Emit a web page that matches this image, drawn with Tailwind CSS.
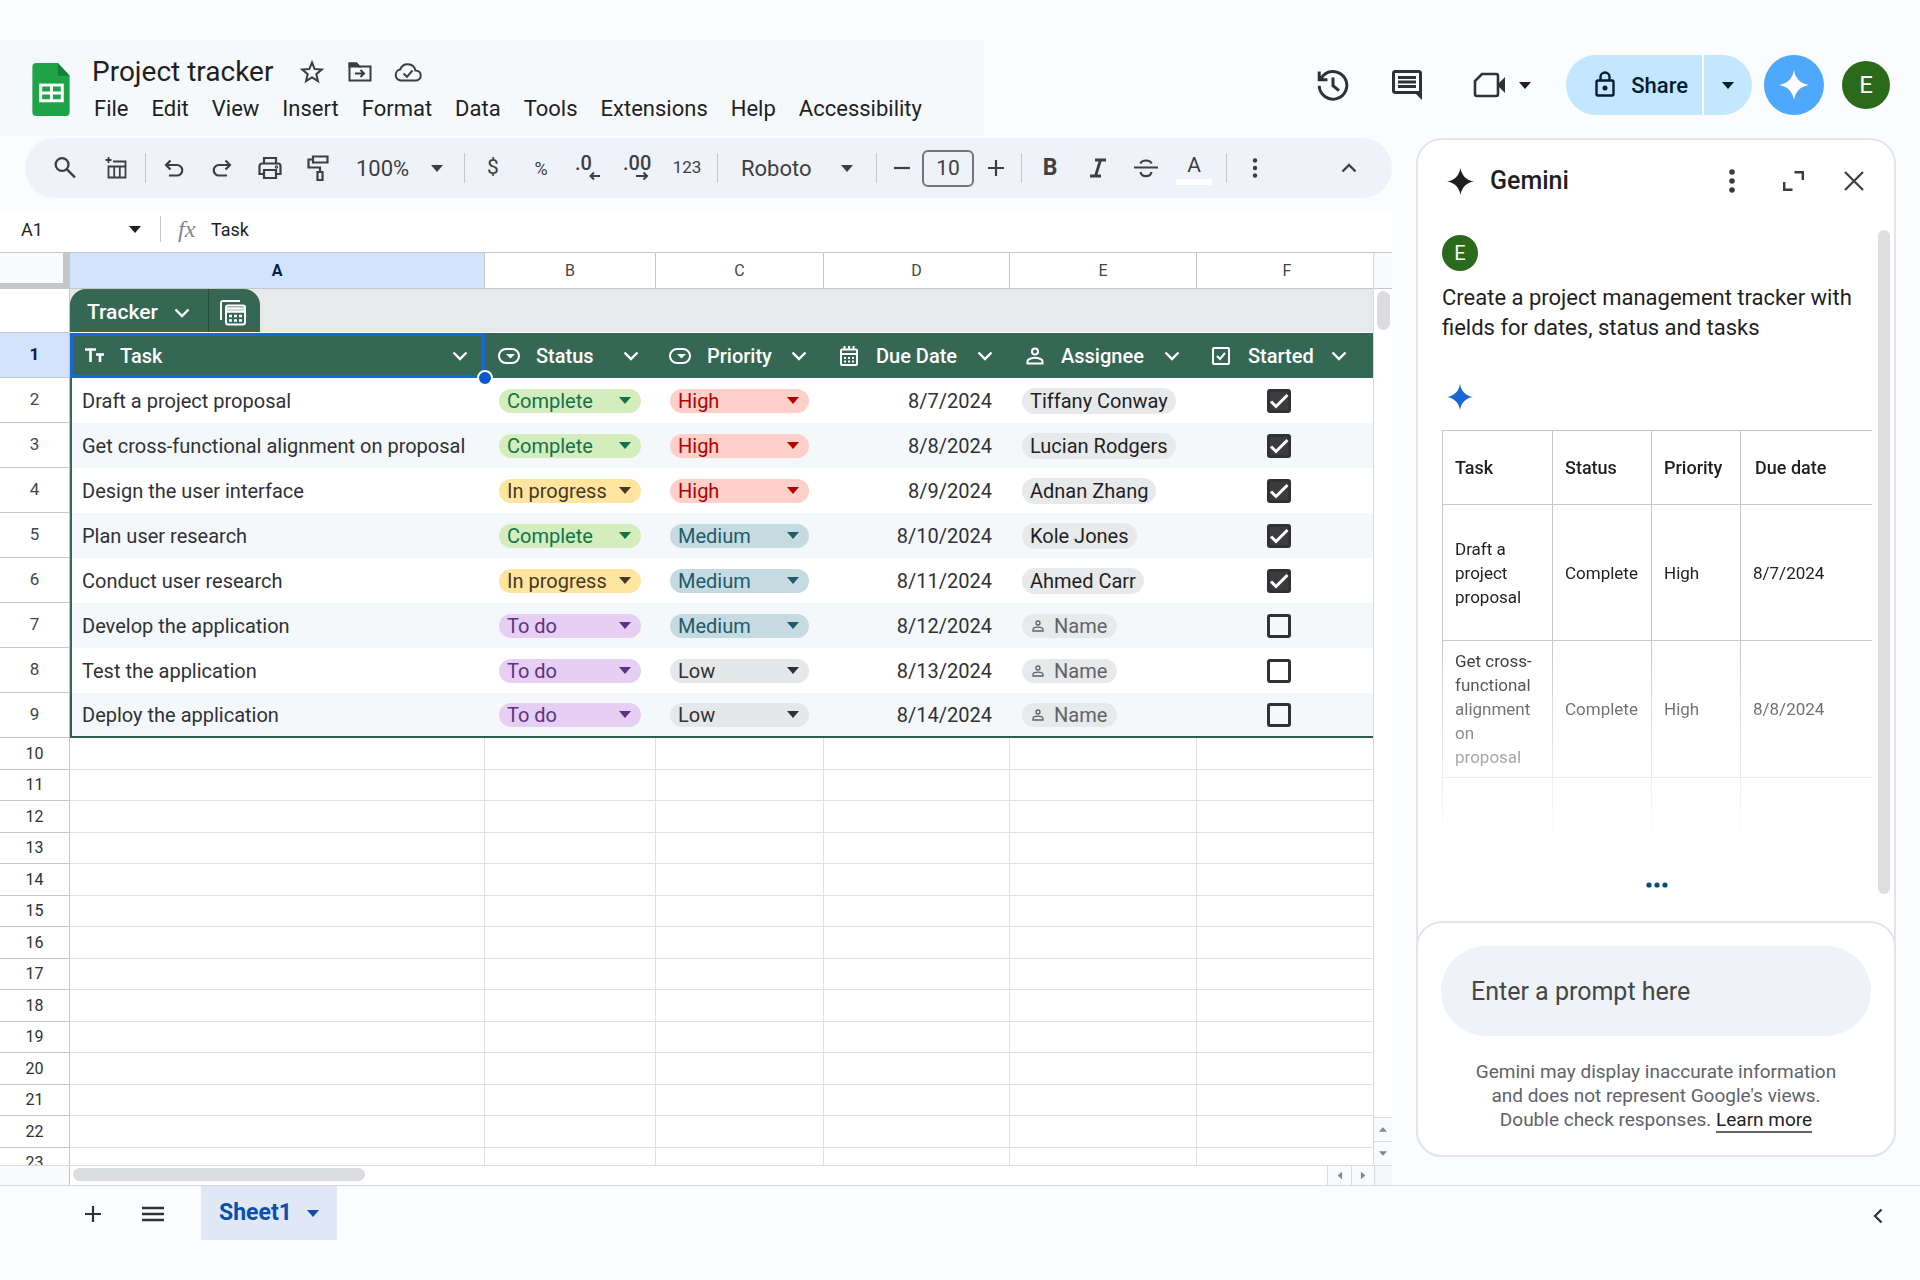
<!DOCTYPE html>
<html lang="en">
<head>
<meta charset="utf-8">
<title>Project tracker</title>
<script src="https://cdn.jsdelivr.net/npm/@tailwindcss/browser@4"></script>
</head>
<body class="flex h-screen flex-col overflow-hidden bg-[#fbfcfe] font-[Roboto,sans-serif] text-[#1f1f1f]">
<svg class="hidden">
  <symbol id="down" viewBox="0 0 12 7"><path d="M0 0h12L6 7z" fill="currentColor"/></symbol>
  <symbol id="chev" viewBox="0 0 16 10"><path d="M1.500 1.500 8 8l6.500-6.500" fill="none" stroke="currentColor" stroke-width="2.400"/></symbol>
  <symbol id="star4" viewBox="0 0 28 28"><path d="M14 0c1.200 7.800 6.200 12.800 14 14-7.800 1.200-12.800 6.200-14 14C12.800 20.200 7.800 15.200 0 14 7.800 12.800 12.800 7.800 14 0z" fill="currentColor"/></symbol>
  <symbol id="person" viewBox="0 0 18 18"><g fill="none" stroke="currentColor" stroke-width="2"><circle cx="9" cy="4.500" r="3"/><path d="M1.500 16.500v-2c0-2.500 4.500-3.700 7.500-3.700s7.500 1.200 7.500 3.700v2z"/></g></symbol>
  <symbol id="pick" viewBox="0 0 22 16"><rect x="1" y="1" width="20" height="14" rx="7" fill="none" stroke="currentColor" stroke-width="2"/><path d="M8 6h9l-4.500 4.500z" fill="currentColor"/></symbol>
  <symbol id="cal" viewBox="0 0 18 20"><path d="M2 3.500h14a1 1 0 0 1 1 1V18a1 1 0 0 1-1 1H2a1 1 0 0 1-1-1V4.500a1 1 0 0 1 1-1zM1 8h16M4.500 0v4M9 0v4M13.500 0v4" fill="none" stroke="currentColor" stroke-width="2"/><path d="M4 11h2v2H4zM8 11h2v2H8zM12 11h2v2h-2zM4 14.500h2v2H4zM8 14.500h2v2H8zM12 14.500h2v2h-2z" fill="currentColor"/></symbol>
  <symbol id="tick" viewBox="0 0 18 18"><g fill="none" stroke="currentColor" stroke-width="2"><rect x="1" y="1" width="16" height="16" rx="1"/><path d="m5 9 3 3 5-6"/></g></symbol>
  <symbol id="text" viewBox="0 0 20 15"><path d="M1 1.500h11M6.500 1.500V14M12 6.500h8M16 6.500V14" fill="none" stroke="currentColor" stroke-width="2.600"/></symbol>
</svg>

<header class="flex h-[138px] shrink-0 items-start justify-between pt-10 pr-[30px]">
  <div class="flex h-24 w-[984px] bg-[#f6f9fb] pl-8">
    <svg class="mt-[23px] h-[53px] w-[38px] shrink-0" viewBox="0 0 38 54"><path d="M4 0h22l12 13v37a4 4 0 0 1-4 4H4a4 4 0 0 1-4-4V4a4 4 0 0 1 4-4z" fill="#1ea446"/><path d="m26 0 12 13H26z" fill="#13803a"/><path d="M7 21h25v19H7z" fill="#fff"/><path d="M10 24h8v5h-8zM21 24h8v5h-8zM10 32h8v5h-8zM21 32h8v5h-8z" fill="#1ea446"/></svg>
    <div class="ml-[22px] flex flex-col pt-4">
      <div class="flex h-8 items-center">
        <h1 class="w-[182px] text-[28px] leading-8 whitespace-nowrap">Project tracker</h1>
        <button aria-label="Star" class="ml-[26px]"><svg class="h-6 w-6" viewBox="0 0 24 24" fill="none" stroke="#3c3c3c" stroke-width="2"><path d="m12 2.500 2.700 6.600 7 .5-5.400 4.600 1.700 7L12 17.400l-6 3.800 1.700-7-5.400-4.600 7-.5z"/></svg></button>
        <button aria-label="Move" class="ml-6"><svg class="h-5 w-6" viewBox="0 0 24 20" fill="none" stroke="#3c3c3c" stroke-width="2"><path d="M1.500 1.500h7l2.500 3h11.500V18.500h-21zM7 11.500h9M12.500 8l3.500 3.500-3.500 3.500"/><path d="M1.500 1.500h7l2.500 3H1.500z" fill="#3c3c3c"/></svg></button>
        <button aria-label="Saved to Drive" class="ml-[22px]"><svg class="h-5 w-7" viewBox="0 0 28 20" fill="none" stroke="#3c3c3c" stroke-width="2"><path d="M7 18.500a5.500 5.500 0 0 1-.8-10.900A8 8 0 0 1 21.500 8.500 5 5 0 0 1 22 18.500zM9.500 11.500l3.500 3.300 5.500-6.300"/></svg></button>
      </div>
      <nav class="mt-[5px] flex gap-[23px] pl-0.5 text-[22px] leading-8">
        <a href="#">File</a><a href="#">Edit</a><a href="#">View</a><a href="#">Insert</a><a href="#">Format</a><a href="#">Data</a><a href="#">Tools</a><a href="#">Extensions</a><a href="#">Help</a><a href="#">Accessibility</a>
      </nav>
    </div>
  </div>
  <div class="flex items-center pt-[15px]">
    <button aria-label="Version history"><svg class="h-9 w-9" viewBox="0 0 24 24" fill="none" stroke="#303134" stroke-width="2"><path d="M2.800 12.500A9.200 9.200 0 1 0 5.700 5.500L3.500 8M2.800 3v5.500H8.300M12 7v5.500l4 3.300"/></svg></button>
    <button aria-label="Comments" class="ml-[38px]"><svg class="h-9 w-9" viewBox="0 0 24 24" fill="#303134"><path d="M21.990 4c0-1.100-.89-2-1.990-2H4c-1.100 0-2 .9-2 2v12c0 1.100.9 2 2 2h14l4 4zM20 4v12H4V4zM6 12h12v2H6zM6 9h12v2H6zM6 6h12v2H6z"/></svg></button>
    <button aria-label="Meet" class="ml-12 flex items-center gap-3.5"><svg class="h-7 w-8" viewBox="0 0 32 28"><path d="M9 3h14a2 2 0 0 1 2 2v18a2 2 0 0 1-2 2H4a2 2 0 0 1-2-2V10z" fill="none" stroke="#303134" stroke-width="2.600"/><path d="m24 14 8-8v16z" fill="#303134"/></svg><svg class="h-[7px] w-3"><use href="#down"/></svg></button>
    <div class="ml-[35px] flex h-[60px] overflow-hidden rounded-full bg-[#c2e7ff] text-[#001d35]">
      <button class="flex w-[136px] items-center justify-end gap-4 pr-3.5 text-[22px] font-medium"><svg class="h-7 w-5" viewBox="0 0 20 28" fill="none" stroke="#001d35" stroke-width="2.400"><rect x="1.500" y="9.500" width="17" height="15" rx="1.500"/><path d="M5.500 9V6a4.500 4.500 0 0 1 9 0v3"/><circle cx="10" cy="17" r="1.300" fill="#001d35"/></svg>Share</button>
      <button aria-label="Share options" class="flex w-[50px] items-center justify-center border-l-2 border-white"><svg class="h-[7px] w-3"><use href="#down"/></svg></button>
    </div>
    <button aria-label="Gemini" class="ml-3 flex h-[60px] w-[60px] items-center justify-center rounded-full bg-[#4ea8fc] text-white"><svg class="h-[30px] w-[30px]"><use href="#star4"/></svg></button>
    <button aria-label="Account" class="ml-[18px] h-12 w-12 rounded-full bg-[#2c6a1b] text-2xl text-white">E</button>
  </div>
</header>

<main class="flex min-h-0 flex-1 gap-6 border-b border-[#d5d8dc] pr-6">
  <section class="flex min-w-0 flex-1 flex-col">
    <div class="ml-[25px] flex h-[60px] shrink-0 items-center rounded-full bg-[#eff2f8] pr-[19px] pl-4 text-[21px] text-[#3c3f43] [&>button]:flex [&>button]:h-12 [&>button]:w-12 [&>button]:shrink-0 [&>button]:items-center [&>button]:justify-center [&>hr]:mx-1 [&>hr]:h-[30px] [&>hr]:w-px [&>hr]:border-0 [&>hr]:bg-[#c4c7c9]">
      <button aria-label="Search"><svg class="h-7 w-7" viewBox="0 0 24 24" fill="none" stroke="currentColor" stroke-width="2"><circle cx="9.500" cy="9" r="5.500"/><path d="m13.500 13 7 7"/></svg></button>
      <button aria-label="Insert table" class="ml-1"><svg class="h-6 w-6" viewBox="0 0 24 24" fill="none" stroke="currentColor" stroke-width="1.800"><path d="M8 5.500h12.500v16h-17V10.500h17M9.200 10.500v11M14.800 10.500v11M3.500 1v6M.5 4h6"/></svg></button>
      <hr>
      <button aria-label="Undo"><svg class="h-5 w-5" viewBox="0 0 20 20" fill="none" stroke="currentColor" stroke-width="2.200"><path d="M6.500 2.500 2 7l4.500 4.500M2 7h11a5 5 0 0 1 0 10.500H5"/></svg></button>
      <button aria-label="Redo"><svg class="h-5 w-5" viewBox="0 0 20 20" fill="none" stroke="currentColor" stroke-width="2.200"><path d="M13.500 2.500 18 7l-4.500 4.500M18 7H7a5 5 0 0 0 0 10.500h8"/></svg></button>
      <button aria-label="Print"><svg class="h-6 w-6" viewBox="0 0 24 24" fill="none" stroke="currentColor" stroke-width="2.200"><path d="M6 7V2h12v5M5 18H1.500v-8a2.500 2.500 0 0 1 2.500-2.500h16a2.500 2.500 0 0 1 2.500 2.500v8H19M6 14h12v8H6z"/><circle cx="18.500" cy="11" r=".6"/></svg></button>
      <button aria-label="Paint format"><svg class="h-[26px] w-[22px]" viewBox="0 0 22 26" fill="none" stroke="currentColor" stroke-width="2.200"><path d="M6 1.500h14.500v6H6zM6 4.500H1.500v8H13V17M10.500 17h5v8h-5z"/></svg></button>
      <button aria-label="Zoom" class="!w-[118px] !justify-between pr-[17px] pl-3.5 text-[22px]">100%<svg class="h-[7px] w-3"><use href="#down"/></svg></button>
      <hr>
      <button aria-label="Currency">$</button>
      <button aria-label="Percent" class="text-[18px]">%</button>
      <button aria-label="Fewer decimals"><svg class="h-8 w-8 overflow-visible" viewBox="0 0 32 32"><text x="2" y="18" font-size="20" font-weight="500" fill="currentColor">.0</text><path d="M27 24h-9M21 20.500 17.500 24l3.500 3.500" fill="none" stroke="currentColor" stroke-width="2"/></svg></button>
      <button aria-label="More decimals"><svg class="h-8 w-8 overflow-visible" viewBox="0 0 32 32"><text x="2" y="18" font-size="20" font-weight="500" fill="currentColor">.00</text><path d="M15 24h11M22.500 20.500 26 24l-3.500 3.500" fill="none" stroke="currentColor" stroke-width="2"/></svg></button>
      <button class="!w-[52px] text-[17px]">123</button>
      <hr>
      <button class="!w-[150px] !justify-between pr-[19px] pl-[19px] text-[22px]">Roboto<svg class="h-[7px] w-3"><use href="#down"/></svg></button>
      <hr>
      <button aria-label="Decrease font size" class="!w-[41px]"><svg class="h-4 w-4" viewBox="0 0 16 16" stroke="currentColor" stroke-width="2.200"><path d="M0 8h16"/></svg></button>
      <input aria-label="Font size" value="10" class="h-[37px] w-[52px] rounded-md border-2 border-[#747775] text-center text-[21px] leading-8">
      <button aria-label="Increase font size" class="!w-[43px]"><svg class="h-4 w-4" viewBox="0 0 16 16" stroke="currentColor" stroke-width="2.200"><path d="M0 8h16M8 0v16"/></svg></button>
      <hr>
      <button aria-label="Bold" class="text-[23px] font-bold">B</button>
      <button aria-label="Italic"><svg class="h-5 w-4" viewBox="0 0 16 20" fill="none" stroke="currentColor" stroke-width="2.800"><path d="M5 2h11M0 18h11M10.500 2l-5 16"/></svg></button>
      <button aria-label="Strikethrough"><svg class="h-6 w-6" viewBox="0 0 24 24" fill="none" stroke="currentColor" stroke-width="2.200"><path d="M0 11.500h24M6.500 7.500C8 3.500 16 3.500 17.500 7.500M6.500 16c1 5.500 10 5.500 11 0"/></svg></button>
      <button aria-label="Text color"><span class="flex w-9 justify-center border-b-[6px] border-white leading-7">A</span></button>
      <hr class="ml-2!">
      <button aria-label="More"><svg class="h-5 w-1.5" viewBox="0 0 6 20" fill="currentColor"><circle cx="3" cy="2.500" r="2.200"/><circle cx="3" cy="10" r="2.200"/><circle cx="3" cy="17.500" r="2.200"/></svg></button>
      <button aria-label="Hide menus" class="ml-auto"><svg class="h-2.5 w-4 rotate-180"><use href="#chev"/></svg></button>
    </div>

    <div class="mt-3 flex h-[43px] shrink-0 items-center border-b border-[#c4c7c9] bg-white pb-1 text-[18px] text-[#1f1f1f]">
      <button class="flex w-[141px] items-center justify-between pl-[21px]">A1<svg class="h-[7px] w-3"><use href="#down"/></svg></button>
      <span class="ml-[19px] h-[26px] w-px bg-[#c4c7c9]"></span>
      <span class="ml-[17px] w-[33px] font-['Liberation_Serif',serif] text-[24px] text-[#80868b] italic">fx</span>
      <input aria-label="Formula" value="Task" class="min-w-0 flex-1">
    </div>

    <div class="flex min-h-0 flex-1">
      <div class="min-w-0 flex-1 overflow-hidden border-r border-[#d9dbde] bg-white">
        <table class="w-full table-fixed border-separate border-spacing-0">
          <colgroup><col class="w-[70px]"><col class="w-[415px]"><col class="w-[171px]"><col class="w-[168px]"><col class="w-[186px]"><col class="w-[187px]"><col></colgroup>
          <thead>
            <tr class="h-9 text-[16px] text-[#444746] [&>th]:border-r [&>th]:border-b [&>th]:border-[#c4c7c9] [&>th]:p-0 [&>th]:font-normal [&>th:last-child]:border-r-0 [&>th:last-child]:pl-1">
              <th class="border-r-[7px]! border-b-[6px]! bg-[#f8fafb]"></th>
              <th class="bg-[#d3e3fd] font-bold! text-[#041e49]">A</th><th>B</th><th>C</th><th>D</th><th>E</th><th>F</th>
            </tr>
          </thead>
          <tbody id="rows">
            <tr class="h-11">
              <td class="border-r border-b border-[#c4c7c9] p-0"></td>
              <td colspan="6" class="border-b border-white bg-[#e8e9eb] p-0 align-top">
                <div class="flex h-[43px] w-[190px] rounded-t-[16px] bg-[#356854] pt-0 text-white">
                  <button class="flex w-[138px] items-center justify-between pt-1 pr-[18px] pl-[17px] text-[21px] font-medium">Tracker<svg class="h-2.5 w-4"><use href="#chev"/></svg></button>
                  <button aria-label="Table views" class="flex flex-1 items-center justify-center border-l border-[#234d3c] pt-1 pr-1"><svg class="h-[26px] w-[26px]" viewBox="0 0 26 26" fill="none" stroke="currentColor" stroke-width="2"><path d="M1 20V3a2 2 0 0 1 2-2h17"/><rect x="6" y="5.500" width="19" height="19" rx="2"/><path d="M6 8.500h19M6 11.500h19" stroke-width="2.500"/><path d="M9 16h3M14 16h3M19 16h3M9 20.500h3M14 20.500h3M19 20.500h3" stroke-width="2.600"/></svg></button>
                </div>
              </td>
            </tr>
            <tr class="h-[45px] bg-[#356854] text-left text-[20px] text-white [&>th]:p-0 [&>th]:font-medium">
              <th class="border-r border-b border-[#c4c7c9] bg-[#d3e3fd] text-center text-[17px] font-bold! text-[#041e49]">1</th>
              <th class="relative"><div class="flex items-center pr-[17px] pl-3.5"><svg class="mr-4 h-[15px] w-5"><use href="#text"/></svg>Task<svg class="ml-auto h-2.5 w-4"><use href="#chev"/></svg></div>
                <div class="absolute inset-0 border-[3px] border-[#1967d2]"></div>
                <div class="absolute -right-2 -bottom-2 z-10 h-4 w-4 rounded-full border-2 border-white bg-[#0b57d0]"></div></th>
              <th><div class="flex items-center pr-[17px] pl-[13px]"><svg class="mr-4 h-4 w-[22px]"><use href="#pick"/></svg>Status<svg class="ml-auto h-2.5 w-4"><use href="#chev"/></svg></div></th>
              <th><div class="flex items-center pr-[17px] pl-[13px]"><svg class="mr-4 h-4 w-[22px]"><use href="#pick"/></svg>Priority<svg class="ml-auto h-2.5 w-4"><use href="#chev"/></svg></div></th>
              <th><div class="flex items-center pr-[17px] pl-4"><svg class="mr-[18px] h-5 w-[18px]"><use href="#cal"/></svg>Due Date<svg class="ml-auto h-2.5 w-4"><use href="#chev"/></svg></div></th>
              <th><div class="flex items-center pr-[17px] pl-4"><svg class="mr-[17px] h-[18px] w-[18px]"><use href="#person"/></svg>Assignee<svg class="ml-auto h-2.5 w-4"><use href="#chev"/></svg></div></th>
              <th><div class="flex items-center pl-[15px]"><svg class="mr-[18px] h-[18px] w-[18px]"><use href="#tick"/></svg>Started<svg class="ml-[17px] h-2.5 w-4"><use href="#chev"/></svg></div></th>
            </tr>
          </tbody>
        </table>
      </div>
      <div class="flex w-[18px] shrink-0 flex-col bg-white">
        <div class="h-9 border-b border-[#c4c7c9] bg-[#f8fafb]"></div>
        <div class="mx-auto mt-0.5 h-[39px] w-[13px] rounded-full bg-[#dadce0]"></div>
        <button aria-label="Scroll up" class="mt-auto flex h-6 items-center justify-center border-t border-[#d9dbde] bg-[#f8fafb] text-[#80868b]"><svg class="h-[5px] w-2 rotate-180"><use href="#down"/></svg></button>
        <button aria-label="Scroll down" class="flex h-6 items-center justify-center border-t border-[#d9dbde] bg-[#f8fafb] text-[#80868b]"><svg class="h-[5px] w-2"><use href="#down"/></svg></button>
      </div>
    </div>

    <div class="flex h-5 shrink-0 border-t border-[#d9dbde] bg-white">
      <div class="w-[70px] border-r border-[#c4c7c9] bg-[#f8fafb]"></div>
      <div class="mt-0.5 ml-[3px] h-[13px] w-[292px] rounded-full bg-[#dadce0]"></div>
      <button aria-label="Scroll left" class="ml-auto flex w-6 items-center justify-center border-l border-[#d9dbde] bg-[#f8fafb] text-[#80868b]"><svg class="h-[5px] w-2 rotate-90"><use href="#down"/></svg></button>
      <button aria-label="Scroll right" class="flex w-6 items-center justify-center border-x border-[#d9dbde] bg-[#f8fafb] text-[#80868b]"><svg class="h-[5px] w-2 -rotate-90"><use href="#down"/></svg></button>
      <div class="w-[17px] bg-[#f4f6f8]"></div>
    </div>
  </section>

  <aside class="mb-7 flex w-[480px] shrink-0 flex-col rounded-[26px] border-2 border-[#e3e5e8] bg-white">
    <div class="flex h-[84px] shrink-0 items-center pr-[30px] pb-0.5 pl-[29px]">
      <svg class="h-[27px] w-[27px]"><use href="#star4"/></svg>
      <h2 class="ml-4 text-[25px] font-medium">Gemini</h2>
      <button aria-label="More options" class="ml-auto"><svg class="h-6 w-1.5" viewBox="0 0 6 24" fill="#3c3c3c"><circle cx="3" cy="3" r="2.800"/><circle cx="3" cy="12" r="2.800"/><circle cx="3" cy="21" r="2.800"/></svg></button>
      <button aria-label="Expand" class="ml-12"><svg class="h-5 w-[21px]" viewBox="0 0 21 20" fill="none" stroke="#3c3c3c" stroke-width="2.400"><path d="M11.500 1.200h8.300V9M1.200 11v7.800h8.300"/></svg></button>
      <button aria-label="Close" class="ml-10"><svg class="h-5 w-5" viewBox="0 0 20 20" stroke="#3c3c3c" stroke-width="2.200"><path d="m1 1 18 18M19 1 1 19"/></svg></button>
    </div>
    <div class="flex min-h-0 flex-1 pt-1.5">
      <div class="flex min-w-0 flex-1 flex-col pl-6">
        <div class="mt-[5px] flex h-9 w-9 shrink-0 items-center justify-center rounded-full bg-[#2c6a1b] text-[20px] text-white">E</div>
        <p class="mt-3 text-[22px] leading-[30px] whitespace-nowrap">Create a project management tracker with<br>fields for dates, status and tasks</p>
        <svg class="mt-[41px] ml-[5px] h-[26px] w-[26px] shrink-0 text-[#1967d2]"><use href="#star4"/></svg>
        <div class="mt-5 h-[412px] shrink-0 overflow-hidden [mask-image:linear-gradient(#000_50%,transparent)]">
          <table class="w-full table-fixed border-separate border-spacing-0 border-t border-l border-[#c4c7c9] text-left text-[17px] leading-6 [&_td]:border-b [&_td]:border-[#c4c7c9] [&_td]:py-0 [&_td]:pr-0 [&_td]:pl-3 [&_td:not(:last-child)]:border-r [&_th]:border-b [&_th]:border-[#c4c7c9] [&_th]:py-0 [&_th]:pr-0 [&_th]:pl-3 [&_th]:font-medium [&_th:not(:last-child)]:border-r">
            <colgroup><col class="w-[110px]"><col class="w-[99px]"><col class="w-[89px]"><col></colgroup>
            <tr class="h-[74px] text-[18px]"><th>Task</th><th>Status</th><th>Priority</th><th><span class="pl-0.5">Due date</span></th></tr>
            <tr class="h-[136px]"><td>Draft a<br>project<br>proposal</td><td>Complete</td><td>High</td><td>8/7/2024</td></tr>
            <tr class="h-[137px]"><td>Get cross-<br>functional<br>alignment<br>on<br>proposal</td><td>Complete</td><td>High</td><td>8/8/2024</td></tr>
            <tr class="h-[137px]"><td></td><td></td><td></td><td></td></tr>
          </table>
        </div>
        <button aria-label="Show more" class="mt-10 self-center"><svg class="h-1.5 w-[22px]" viewBox="0 0 22 6" fill="#004a77"><circle cx="3" cy="3" r="2.600"/><circle cx="11" cy="3" r="2.600"/><circle cx="19" cy="3" r="2.600"/></svg></button>
      </div>
      <div class="mr-1 ml-1.5 h-[664px] w-3 shrink-0 rounded-full bg-[#dcdee0]"></div>
    </div>
    <form class="-mx-0.5 -mb-0.5 flex h-[236px] shrink-0 flex-col rounded-[26px] border-2 border-[#e3e5e8] bg-white px-[23px] pt-[23px]">
      <input aria-label="Prompt" placeholder="Enter a prompt here" class="h-[90px] shrink-0 rounded-full bg-[#eff3f8] px-[30px] text-[25px] placeholder:text-[#444746]">
      <p class="mt-6 text-center text-[19px] leading-6 text-[#5f6368]">Gemini may display inaccurate information<br>and does not represent Google's views.<br>Double check responses. <a href="#" class="border-b-2 border-[#5f6368] text-[#1f1f1f]">Learn more</a></p>
    </form>
  </aside>
</main>

<footer class="flex h-[94px] shrink-0 items-start pr-9">
  <button aria-label="Add sheet" class="mt-[20px] ml-[85px]"><svg class="h-4 w-4" viewBox="0 0 16 16" stroke="#303134" stroke-width="2.200"><path d="M0 8h16M8 0v16"/></svg></button>
  <button aria-label="All sheets" class="mt-[20px] ml-[41px]"><svg class="h-4 w-[22px]" viewBox="0 0 22 16" stroke="#303134" stroke-width="2.400"><path d="M0 2h22M0 8h22M0 14h22"/></svg></button>
  <button class="ml-[37px] flex h-[54px] w-[136px] items-center justify-between bg-[#e1e8f5] pr-[18px] pl-[18px] text-[23px] font-bold text-[#0b4fae]">Sheet1<svg class="h-[7px] w-3"><use href="#down"/></svg></button>
  <button aria-label="Show side panel" class="mt-[22px] ml-auto"><svg class="h-4 w-3" viewBox="0 0 12 16" fill="none" stroke="#303134" stroke-width="2.200"><path d="M9.500 1.500 3 8l6.500 6.500"/></svg></button>
</footer>

<script>
  const tone = {
    Complete: 'bg-[#d4edbc] text-[#11734b]', 'In progress': 'bg-[#ffe5a0] text-[#473821]', 'To do': 'bg-[#e6cff2] text-[#5a3286]',
    High: 'bg-[#ffcfc9] text-[#b10202]', Medium: 'bg-[#c6dbe1] text-[#215a6c]', Low: 'bg-[#e6e7e8] text-[#303134]'
  };
  const tasks = [
    ['Draft a project proposal', 'Complete', 'High', '8/7/2024', 'Tiffany Conway', 1],
    ['Get cross-functional alignment on proposal', 'Complete', 'High', '8/8/2024', 'Lucian Rodgers', 1],
    ['Design the user interface', 'In progress', 'High', '8/9/2024', 'Adnan Zhang', 1],
    ['Plan user research', 'Complete', 'Medium', '8/10/2024', 'Kole Jones', 1],
    ['Conduct user research', 'In progress', 'Medium', '8/11/2024', 'Ahmed Carr', 1],
    ['Develop the application', 'To do', 'Medium', '8/12/2024', '', 0],
    ['Test the application', 'To do', 'Low', '8/13/2024', '', 0],
    ['Deploy the application', 'To do', 'Low', '8/14/2024', '', 0]
  ];
  const chip = (v, label, w) => `<div class="relative ml-3.5 ${w} h-6 rounded-full ${tone[v]}"><select aria-label="${label}" class="block h-6 w-full appearance-none rounded-full bg-transparent pl-2 leading-6"><option>${v}</option></select><svg class="pointer-events-none absolute top-2 right-2.5 h-[7px] w-3"><use href="#down"/></svg></div>`;
  const person = n => n
    ? `<span class="ml-3 flex h-[26px] w-fit items-center rounded-full bg-[#e8e9ea] px-2 text-[#1f1f1f]">${n}</span>`
    : `<span class="ml-3 flex h-6 w-fit items-center rounded-full bg-[#e8e9ea] px-2.5 text-[#5f6368]"><svg class="mr-2.5 h-3 w-3"><use href="#person"/></svg>Name</span>`;
  let html = '';
  tasks.forEach(([task, status, priority, due, who, done], i) => {
    const last = i === tasks.length - 1;
    html += `<tr class="h-[45px] text-[20px] text-[#303134] [&>td]:p-0 ${i % 2 ? 'bg-[#f5f8fa]' : 'bg-white'} ${last ? '[&>td]:border-b-2 [&>td]:border-[#2f5d4b]' : ''}">
      <th class="border-r border-b border-[#c4c7c9] bg-white p-0 text-[17px] font-normal text-[#444746]">${i + 2}</th>
      <td class="border-l-2 border-[#356854] whitespace-nowrap"><span class="pl-[10px]">${task}</span></td>
      <td>${chip(status, 'Status', 'w-[142px]')}</td>
      <td>${chip(priority, 'Priority', 'w-[139px]')}</td>
      <td class="text-right"><span class="pr-[18px]">${due}</span></td>
      <td>${person(who)}</td>
      <td><span class="ml-[70px] grid h-6 w-6"><input type="checkbox" aria-label="Started" ${done ? 'checked' : ''} class="col-start-1 row-start-1 h-6 w-6 appearance-none rounded-[3px] border-[3px] border-[#303134] checked:bg-[#3c3c3f]">${done ? '<svg class="pointer-events-none col-start-1 row-start-1 h-6 w-6" viewBox="0 0 24 24"><path d="m4 12.500 5 5L20.500 6" fill="none" stroke="#fff" stroke-width="3"/></svg>' : ''}</span></td></tr>`;
  });
  for (let n = 10; n < 24; n++) {
    html += `<tr class="${n % 2 ? 'h-[31px]' : 'h-8'}"><th class="border-r border-b border-[#c4c7c9] p-0 text-[16px] leading-6 font-normal text-[#303134]">${n}</th>${'<td class="border-r border-b border-[#dfe1e4] p-0 last:border-r-0"></td>'.repeat(6)}</tr>`;
  }
  document.getElementById('rows').insertAdjacentHTML('beforeend', html);
</script>
</body>
</html>
